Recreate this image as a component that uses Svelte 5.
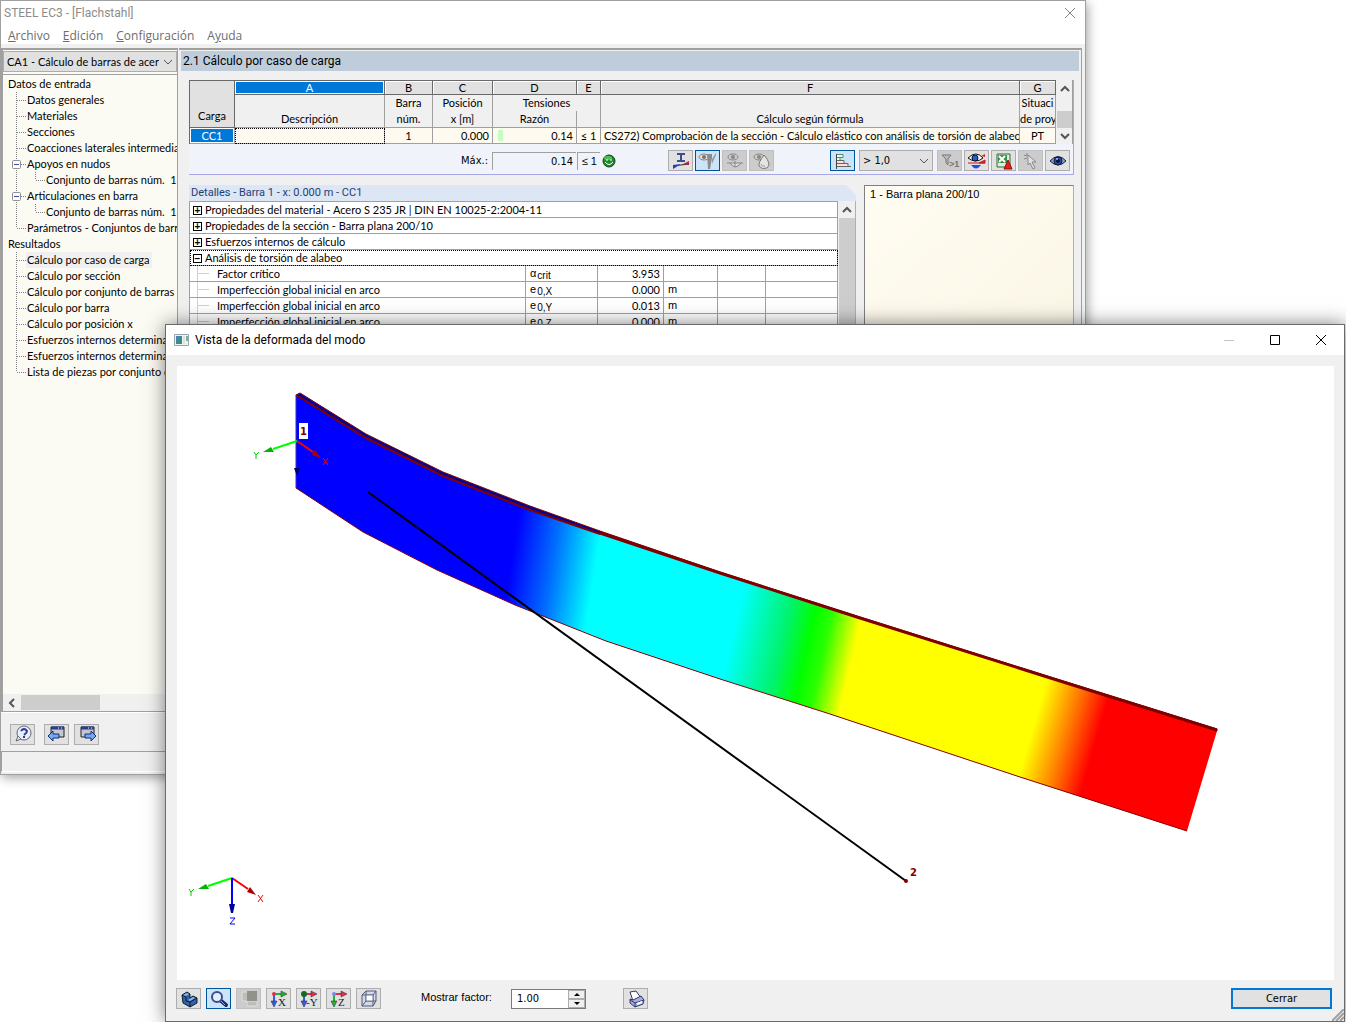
<script lang="ts">
    type TreeItem = { label: string; level: number; last?: boolean; open?: boolean };

    const menu = [
        { key: "A", before: "", after: "rchivo" },
        { key: "E", before: "", after: "dición" },
        { key: "C", before: "", after: "onfiguración" },
        { key: "y", before: "A", after: "uda" },
    ];

    const tree: TreeItem[] = [
        { label: "Datos de entrada", level: 0 },
        { label: "Datos generales", level: 1 },
        { label: "Materiales", level: 1 },
        { label: "Secciones", level: 1 },
        { label: "Coacciones laterales intermedias", level: 1 },
        { label: "Apoyos en nudos", level: 1, open: true },
        { label: "Conjunto de barras núm.  1", level: 2, last: true },
        { label: "Articulaciones en barra", level: 1, open: true },
        { label: "Conjunto de barras núm.  1", level: 2, last: true },
        { label: "Parámetros - Conjuntos de barras", level: 1, last: true },
        { label: "Resultados", level: 0 },
        { label: "Cálculo por caso de carga", level: 1 },
        { label: "Cálculo por sección", level: 1 },
        { label: "Cálculo por conjunto de barras", level: 1 },
        { label: "Cálculo por barra", level: 1 },
        { label: "Cálculo por posición x", level: 1 },
        { label: "Esfuerzos internos determinantes", level: 1 },
        { label: "Esfuerzos internos determinantes", level: 1 },
        { label: "Lista de piezas por conjunto de barras", level: 1, last: true },
    ];

    const groups = [
        "Propiedades del material - Acero S 235 JR | DIN EN 10025-2:2004-11",
        "Propiedades de la sección - Barra plana 200/10",
        "Esfuerzos internos de cálculo",
    ];

    const details = [
        { name: "Factor crítico", symbol: "α", sub: "crit", value: "3.953", unit: "" },
        { name: "Imperfección global inicial en arco", symbol: "e", sub: "0,X", value: "0.000", unit: "m" },
        { name: "Imperfección global inicial en arco", symbol: "e", sub: "0,Y", value: "0.013", unit: "m" },
        { name: "Imperfección global inicial en arco", symbol: "e", sub: "0,Z", value: "0.000", unit: "m" },
    ];

    const viewTools = ["solid", "lens", "layers", "axisX", "axisY", "axisZ", "cube"];
    const titles: Record<string, string> = {
        solid: "Modelo", lens: "Zoom", layers: "Capas", axisX: "Vista X", axisY: "Vista -Y", axisZ: "Vista Z", cube: "Isométrica",
    };

    let selected = $state(11);
    let activeTool = $state("lens");
    let factor = $state("1.00");

    function step(delta: number) {
        factor = (Number(factor) + delta).toFixed(2);
    }
</script>

{#snippet chevron(dir: string)}
    <svg class="chevron {dir}" width="10" height="10" viewBox="0 0 10 10" aria-hidden="true">
        <path d="M1 3 L5 7 L9 3" fill="none" stroke="currentColor" />
    </svg>
{/snippet}

{#snippet icon(name: string)}
    <svg width="20" height="18" viewBox="0 0 20 18" aria-hidden="true">
        {#if name === "section"}
            <path d="M6 2h8M10 2v7M6 9h8" stroke="#3c4f8c" stroke-width="2" fill="none" />
            <path d="M2 17v-4l8-1z" fill="#2438e0" />
            <path d="M10 13l8-4v4z" fill="#e02030" />
            <path d="M2 14l16-2" stroke="#444" />
        {:else if name === "member"}
            <ellipse cx="6" cy="5" rx="5" ry="3" fill="#ddd" stroke="#888" />
            <circle cx="6" cy="5" r="2" fill="#777" />
            <path d="M9 2h5v4l-2 11h-2z" fill="#8c8c8c" />
            <path d="M18 1v2l-4 9v-5z" fill="#999" />
        {:else if name === "diagram"}
            <ellipse cx="8" cy="5" rx="5" ry="3" fill="#ccc" stroke="#888" />
            <circle cx="8" cy="5" r="2" fill="#888" />
            <path d="M5 11q5 8 11 0" stroke="#888" fill="#ddd" />
            <path d="M2 11h16M10 9v6" stroke="#888" />
        {:else if name === "drop"}
            <ellipse cx="7" cy="5" rx="5" ry="3" fill="#ccc" stroke="#888" />
            <circle cx="7" cy="5" r="2" fill="#888" />
            <path d="M12 3q8 9 3 13q-5 2-8-2q-1-3 5-11z" fill="#e4e4e0" stroke="#777" />
            <path d="M9 12q1 3 4 2" stroke="#999" fill="none" />
        {:else if name === "bars"}
            <path d="M3.5 2v15" stroke="#444" />
            <path d="M4 2.5h6v3h-6M4 5.5h3v3h-3" stroke="#4f8f6c" fill="#e6ffe8" />
            <path d="M4 8.5h7v3h-7M4 11.5h11v3h-11M4 14.5h14" stroke="#666" fill="#ffdede" />
        {:else if name === "filter"}
            <path d="M2 3h9l-3 4v6l-2-2v-4z" fill="#bbb" stroke="#777" />
            <text x="9" y="15" class="filter-text">&gt;1</text>
        {:else if name === "results"}
            <path d="M1 6q8-8 15 0q-7 6-15 0z" fill="#fff" stroke="#111" />
            <circle cx="8" cy="6" r="3" fill="#2360d0" stroke="#111" />
            <path d="M1 11h17M12 11h6l0-3z" stroke="#c31824" fill="#ef3030" />
            <path d="M14 4l4-2v3z" fill="#e02030" />
            <path d="M4 13h10q-5 7-10 0z" fill="#3044e8" />
        {:else if name === "excel"}
            <path d="M3 2h13v13h-13z" fill="#dbeedb" stroke="#2d6b37" />
            <path d="M4 3h9v8h-9z" fill="#3d8d4b" />
            <path d="M5 4l6 6M11 4l-6 6" stroke="#fff" stroke-width="2" />
            <path d="M14 8l4 9h-8z" fill="#ea1c1c" stroke="#8d1010" />
        {:else if name === "pick"}
            <path d="M3 3l3 1M3 7l3-1M6 1v3" stroke="#888" />
            <path d="M7 3l8 7l-4 0l3 6l-2 1l-3-6l-2 2z" fill="#e2e2e2" stroke="#888" />
        {:else if name === "eye"}
            <path d="M2 9q8-9 16 0q-8 8-16 0z" fill="#9aa3b5" stroke="#15203e" />
            <circle cx="10" cy="9" r="4" fill="#2251b8" stroke="#0b1840" />
            <circle cx="10" cy="9" r="2" fill="#081430" />
            <path d="M8 7h2" stroke="#fff" />
        {:else if name === "help"}
            <circle cx="11" cy="8" r="7" fill="#e9edf6" stroke="#667" />
            <path d="M5 11l-2 5l5-2z" fill="#e9edf6" stroke="#667" />
            <path d="M8 6q3-4 6 0q0 2-3 4M11 11v2" fill="none" stroke="#273d8e" stroke-width="2" />
        {:else if name === "back" || name === "next"}
            <path d="M4 2h13v10h-13z" fill="#c3c7cf" stroke="#222" />
            <path d="M4 3h13" stroke="#2b3c90" stroke-width="3" />
            <path d="M14 3h1M11 3h1" stroke="#fff" />
            {#if name === "back"}
                <path d="M1 11l5-5v3h6v4h-6v3z" fill="#74a8f4" stroke="#142b78" />
            {:else}
                <path d="M19 11l-5-5v3h-6v4h6v3z" fill="#74a8f4" stroke="#142b78" />
            {/if}
        {:else if name === "solid"}
            <path d="M3 5l5-3l3 2l0 4l3-2l4 2v5l-7 4l-7-4z" fill="#2f65a6" stroke="#111b2c" />
            <path d="M3 5l4 2v4l4 1l7-4M11 12v5" fill="none" stroke="#111b2c" />
            <path d="M4 5l4-2l2 1l-3 2zM9 10l5-3l2 1l-5 3z" fill="#86baf0" />
        {:else if name === "lens"}
            <path d="M11 10l6 5" stroke="#1d2c62" stroke-width="4" stroke-linecap="round" />
            <path d="M12 11l4 4" stroke="#8fa4e4" stroke-width="1" />
            <circle cx="8" cy="7" r="5" fill="#e3f0fd" stroke="#3c4c8c" stroke-width="2" />
        {:else if name === "layers"}
            <path d="M3 2h6v9h-6zM8 11h10v5h-10z" fill="#bebeb9" stroke="#ddd" />
            <path d="M8 1h10v10h-10z" fill="#92928d" />
        {:else if name.startsWith("axis")}
            {@const side = name === "axisZ" ? "#20b432" : "#3a59e8"}
            {@const top = name === "axisX" ? "#20b432" : "#e03048"}
            <path d="M5 4v9" stroke={side} stroke-width="2" />
            <path d="M2 11h6l-3 6z" fill={side} stroke="#223" stroke-width=".5" />
            <path d="M5 4h8" stroke={top} stroke-width="2" />
            <path d="M12 1v6l6-3z" fill={top} stroke="#223" stroke-width=".5" />
            <circle cx="5" cy="4" r={name === "axisY" ? 3 : 2} fill={name === "axisY" ? "#126b20" : name === "axisX" ? "#e03048" : "#7889e8"} />
            <text x={name === "axisY" ? 7 : 9} y="16" class="axis-letter">{name === "axisY" ? "-Y" : name.slice(-1)}</text>
        {:else if name === "cube"}
            <path d="M3 5l4-4h10v10l-3 5h-11z" fill="#d4daea" stroke="#4e587c" />
            <path d="M3 5h11v11M14 5l3-4M7 1v10h10M7 11l-4 5" fill="none" stroke="#4e587c" />
            <path d="M7 5h7v6h-7z" fill="#fff" stroke="#6f7894" />
        {:else if name === "printer"}
            <path d="M4 2l6-1l5 7l-8 3z" fill="#fff" stroke="#333a55" />
            <path d="M4 9l3 1l8-4l3 4l-1 4l-8 3l-5-4z" fill="#a7aede" stroke="#30386a" />
            <path d="M4 10l5 3l9-3M9 13v4" fill="none" stroke="#30386a" />
            <path d="M11 14l5-2" stroke="#fff" stroke-width="2" />
        {/if}
    </svg>
{/snippet}

{#snippet tool(name: string, label: string, active = false, disabled = false)}
    <button class="tool" class:active {disabled} aria-label={label}>{@render icon(name)}</button>
{/snippet}

{#snippet guide(kind: string)}
    <svg class="guide" width="19" height="16" viewBox="0 0 19 16" aria-hidden="true">
        <path d={kind === "last" ? "M8.5 0v8" : "M8.5 0v16"} class="dots" />
        {#if kind !== "pass"}
            <path d="M9 8.5h9" class="dots" />
        {/if}
        {#if kind === "box"}
            <rect x="4.5" y="4.5" width="8" height="8" rx="1" fill="#fbfbf7" stroke="#919191" />
            <path d="M6 8.5h5" stroke="#3b4fa8" />
        {/if}
    </svg>
{/snippet}

<main>
    <section class="window app" aria-label="STEEL EC3">
        <header class="titlebar">
            <h1>STEEL EC3 - [Flachstahl]</h1>
            <button class="close" aria-label="Cerrar ventana">
                <svg width="12" height="12" viewBox="0 0 12 12"><path d="M1 1l10 10M11 1L1 11" stroke="#888" /></svg>
            </button>
        </header>
        <nav>
            {#each menu as item}
                <button>{item.before}<u>{item.key}</u>{item.after}</button>
            {/each}
        </nav>

        <div class="work">
            <aside>
                <div class="combo case">
                    <select aria-label="Caso"><option>CA1 - Cálculo de barras de acero</option></select>
                    {@render chevron("down")}
                </div>
                <ul class="tree">
                    {#each tree as item, i}
                        <li>
                            {#if item.level === 2}{@render guide("pass")}{/if}
                            {#if item.level > 0}{@render guide(item.open ? "box" : item.last ? "last" : "mid")}{/if}
                            <button class:selected={selected === i} onclick={() => (selected = i)}>{item.label}</button>
                        </li>
                    {/each}
                </ul>
                <div class="hscroll">{@render chevron("left")}<span class="thumb"></span></div>
            </aside>

            <div class="content">
                <h2>2.1 Cálculo por caso de carga</h2>

                <div class="results">
                    <div class="grid-wrap">
                        <table class="grid">
                            <colgroup>
                                <col class="c45" /><col class="c150" /><col class="c48" /><col class="c60" />
                                <col class="c84" /><col class="c24" /><col /><col class="c36" />
                            </colgroup>
                            <thead>
                                <tr class="letters">
                                    <th rowspan="3" class="corner">Carga</th>
                                    <th class="current">A</th><th>B</th><th>C</th><th>D</th><th>E</th><th>F</th><th>G</th>
                                </tr>
                                <tr class="names">
                                    <th></th><th>Barra</th><th>Posición</th><th colspan="2">Tensiones</th><th></th><th>Situaci</th>
                                </tr>
                                <tr class="names bottom">
                                    <th>Descripción</th><th>núm.</th><th>x [m]</th><th>Razón</th><th></th>
                                    <th>Cálculo según fórmula</th><th>de proy</th>
                                </tr>
                            </thead>
                            <tbody>
                                <tr>
                                    <th class="current">CC1</th>
                                    <td class="focus"></td>
                                    <td class="center">1</td>
                                    <td class="num">0.000</td>
                                    <td class="num ratio">0.14</td>
                                    <td class="center">≤ 1</td>
                                    <td class="formula">CS272) Comprobación de la sección - Cálculo elástico con análisis de torsión de alabeo</td>
                                    <td class="center">PT</td>
                                </tr>
                            </tbody>
                        </table>
                        <div class="vscroll">{@render chevron("up")}<span class="thumb"></span>{@render chevron("down")}</div>
                    </div>

                    <div class="bar">
                        <span class="max">Máx.:</span>
                        <output class="max-value">0.14</output>
                        <output class="max-limit">≤ 1</output>
                        <svg class="smiley" width="14" height="14" viewBox="0 0 14 14" aria-hidden="true">
                            <circle cx="7" cy="7" r="6" fill="#1d8a2c" stroke="#0b4a18" />
                            <ellipse cx="6" cy="4" rx="4" ry="2" fill="#7de07f" opacity=".6" />
                            <path d="M5 5v2M9 5v2" stroke="#fff" stroke-width="1" />
                            <path d="M3 8q4 5 8 0" fill="none" stroke="#fff" />
                        </svg>
                        <div class="tools left-tools">
                            {@render tool("section", "Sección")}
                            {@render tool("member", "Barra", true)}
                            {@render tool("diagram", "Diagrama", false, true)}
                            {@render tool("drop", "Colores", false, true)}
                        </div>
                        <div class="tools">
                            {@render tool("bars", "Barras de color", true)}
                            <div class="combo limit">
                                <select aria-label="Límite"><option>&gt; 1,0</option></select>
                                {@render chevron("down")}
                            </div>
                            {@render tool("filter", "Filtro", false, true)}
                            {@render tool("results", "Resultados")}
                            {@render tool("excel", "Exportar a Excel")}
                            {@render tool("pick", "Seleccionar", false, true)}
                            {@render tool("eye", "Modo de vista")}
                        </div>
                    </div>
                </div>

                <div class="lower">
                    <div class="details">
                        <h3>Detalles - Barra 1 - x: 0.000 m - CC1</h3>
                        <div class="details-body">
                            <table>
                                <colgroup>
                                    <col /><col class="c72" /><col class="c66" /><col class="c54" /><col class="c48" /><col class="c72" />
                                </colgroup>
                                <tbody>
                                    {#each groups as group}
                                        <tr><td colspan="6" class="group"><span class="toggle">+</span>{group}</td></tr>
                                    {/each}
                                    <tr><td colspan="6" class="group focus"><span class="toggle">−</span>Análisis de torsión de alabeo</td></tr>
                                    {#each details as row}
                                        <tr>
                                            <td class="name">{row.name}</td>
                                            <td class="symbol">{row.symbol}<small>{row.sub}</small></td>
                                            <td class="num">{row.value}</td>
                                            <td class="unit">{row.unit}</td>
                                            <td></td>
                                            <td></td>
                                        </tr>
                                    {/each}
                                </tbody>
                            </table>
                            <div class="vscroll long">{@render chevron("up")}<span class="thumb"></span></div>
                        </div>
                    </div>
                    <div class="preview">1 - Barra plana 200/10</div>
                </div>
            </div>
        </div>

        <footer>
            {@render tool("help", "Ayuda")}
            <span class="pair">{@render tool("back", "Anterior")}{@render tool("next", "Siguiente")}</span>
        </footer>
        <div class="status"></div>
    </section>

    <section class="window dialog" aria-label="Vista de la deformada del modo">
        <header class="titlebar">
            <svg class="appicon" width="16" height="14" viewBox="0 0 16 14" aria-hidden="true">
                <path d="M.5 1.5h14v11h-14z" fill="#eef2f5" stroke="#9ba5ad" />
                <path d="M2 3h6v8h-6z" fill="#3d8f7c" />
                <path d="M2 3h3v5h-3z" fill="#4a86b4" />
                <path d="M9 3h2v8h-2z" fill="#dce2e6" />
                <path d="M12 3h2v5h-2z" fill="#72b59c" />
            </svg>
            <h1>Vista de la deformada del modo</h1>
            <div class="controls">
                <button aria-label="Minimizar" disabled><svg width="12" height="12" viewBox="0 0 12 12"><path d="M1 6.5h10" stroke="#c4c4c4" /></svg></button>
                <button aria-label="Maximizar"><svg width="12" height="12" viewBox="0 0 12 12"><path d="M1.5 1.5h9v9h-9z" fill="none" stroke="#000" /></svg></button>
                <button aria-label="Cerrar ventana"><svg width="12" height="12" viewBox="0 0 12 12"><path d="M1 1l10 10M11 1L1 11" stroke="#000" /></svg></button>
            </div>
        </header>

        <div class="canvas">
            <svg viewBox="177 366 1157 614" preserveAspectRatio="xMidYMid meet" role="img" aria-label="Deformada de la barra">
                <defs>
                    <linearGradient id="cold" gradientUnits="userSpaceOnUse" x1="511" y1="563" x2="594" y2="576">
                        <stop offset="0" stop-color="#00f" />
                        <stop offset=".5" stop-color="#0070ff" />
                        <stop offset="1" stop-color="#0ff" />
                    </linearGradient>
                    <linearGradient id="mild" gradientUnits="userSpaceOnUse" x1="731" y1="640" x2="850" y2="667">
                        <stop offset="0" stop-color="#0ff" />
                        <stop offset=".42" stop-color="#00f36c" />
                        <stop offset=".62" stop-color="#0f0" />
                        <stop offset=".76" stop-color="#2bff00" />
                        <stop offset="1" stop-color="#ff0" />
                    </linearGradient>
                    <linearGradient id="hot" gradientUnits="userSpaceOnUse" x1="1032" y1="730" x2="1094" y2="748">
                        <stop offset="0" stop-color="#ff0" />
                        <stop offset=".55" stop-color="#ff7800" />
                        <stop offset="1" stop-color="#f00" />
                    </linearGradient>
                    <clipPath id="plate">
                        <path d="M296 395L366 438L443 476L530 510L600 534L720 574L860 618L1060 681L1217 731L1187 831L1020 777L830 714L720 679L606 641L515 605L437 570L363 532L296 488Z" />
                    </clipPath>
                </defs>
                <path d="M296 395L300 393L366 434L443 472L530 506L600 531L720 572L860 617L1060 680L1217 729L1217 731L1060 681L860 619L720 575L600 535L530 510L443 476L366 438Z" fill="#00009c" stroke="#800000" />
                <g clip-path="url(#plate)">
                    <path d="M290 380H690L670 700H290Z" fill="url(#cold)" />
                    <path d="M670 380H990L950 860H640Z" fill="url(#mild)" />
                    <path d="M980 380H1230V860H935Z" fill="url(#hot)" />
                </g>
                <path d="M296 395L366 438L443 476L530 510L600 534" fill="none" stroke="#800000" stroke-width="2" />
                <path d="M600 533L720 573L860 618L1060 681L1217 730" fill="none" stroke="#800000" stroke-width="3" />
                <path d="M296 488L363 532L437 570L515 605L606 641L720 679L830 714L1020 777L1187 831" fill="none" stroke="#800000" />
                <path d="M296 395V488" stroke="#3030c0" />
                <path d="M368 492L906 881" stroke="#000" stroke-width="2" />
                <circle cx="906" cy="881" r="2" fill="#800000" />
                <text x="910" y="876" class="node">2</text>

                <path d="M299 423h9v16h-9z" fill="#fff" />
                <text x="300" y="435" class="node">1</text>
                <path d="M294 468h6l-3 8z" fill="#000070" />

                {#each [[297, 441], [232, 878]] as [x, y], i}
                    <path d="M{x} {y}l-24 8" stroke="#0f0" stroke-width="2" />
                    <path d="M{x - 34} {y + 11}l8-5l3 5z" fill="#00b400" />
                    <path d="M{x} {y}l16 11" stroke="#f00" stroke-width="2" />
                    <path d="M{x + 24} {y + 17}l-9-3l3-5z" fill="#a80000" />
                    <path d="M{x - 43} {y + 11}l2 3l3-3M{x - 41} {y + 14}v4" stroke="#0c0" fill="none" />
                    <path d="M{x + 26} {y + 17}l5 7M{x + 31} {y + 17}l-5 7" stroke="#f00" fill="none" />
                    {#if i === 1}
                        <path d="M{x} {y}v28" stroke="#00f" stroke-width="2" />
                        <path d="M{x - 3} {y + 26}h6l-2 9h-2z" fill="#0000a0" />
                        <path d="M{x - 2} {y + 40}h5l-5 6h5" stroke="#00f" fill="none" />
                    {/if}
                {/each}
            </svg>
        </div>

        <footer>
            <div class="view-tools">
                {#each viewTools as name}
                    <button class="tool" class:active={activeTool === name} disabled={name === "layers"} aria-label={titles[name]} onclick={() => (activeTool = name)}>
                        {@render icon(name)}
                    </button>
                {/each}
            </div>
            <label for="factor">Mostrar factor:</label>
            <div class="spinner">
                <input id="factor" type="text" bind:value={factor} />
                <span class="arrows">
                    <button aria-label="Aumentar" onclick={() => step(1)}><svg width="6" height="3" viewBox="0 0 6 3"><path d="M0 3l3-3l3 3z" /></svg></button>
                    <button aria-label="Reducir" onclick={() => step(-1)}><svg width="6" height="3" viewBox="0 0 6 3"><path d="M0 0l3 3l3-3z" /></svg></button>
                </span>
            </div>
            {@render tool("printer", "Imprimir")}
            <button class="primary">Cerrar</button>
        </footer>
        <svg class="grip" width="12" height="12" viewBox="0 0 12 12" aria-hidden="true">
            <path d="M0 12L12 0M4 12l8-8M8 12l4-4" stroke="#a0a0a0" stroke-width="2" />
        </svg>
    </section>
</main>

<style>
    :global(body) {
        margin: 0;
        background: #fff;
    }
    main {
        --ui: Lato, "Liberation Sans", sans-serif;
        --title: Roboto, "Liberation Sans", sans-serif;
        --menu: "Open Sans", "Noto Sans", sans-serif;
        --sans: "Liberation Sans", sans-serif;
        --tahoma: "DejaVu Sans Condensed", "Liberation Sans", sans-serif;
        --line: #a0a0a0;
        position: relative;
        height: 100vh;
        min-height: 800px;
        overflow: hidden;
        font: 11px/16px var(--ui);
        color: #000;
    }
    main * {
        box-sizing: border-box;
    }
    button, select, input {
        font: inherit;
        color: inherit;
        margin: 0;
        padding: 0;
        border: 0;
        background: none;
        border-radius: 0;
    }
    h1, h2, h3, ul {
        margin: 0;
        padding: 0;
        font-weight: normal;
    }
    svg {
        display: block;
        flex: none;
    }
    .window {
        position: absolute;
        display: flex;
        flex-direction: column;
        background: #f0f0f0;
    }
    .app {
        inset: 0 260px 247px 0;
        border: 1px solid var(--line);
        box-shadow: 2px 3px 10px rgba(0, 0, 0, .35);
    }
    .dialog {
        inset: 324px 1px 0 165px;
        border: 1px solid #6a6a6a;
        box-shadow: 0 0 18px rgba(0, 0, 0, .5);
    }
    .titlebar {
        display: flex;
        align-items: center;
        background: #fff;
    }
    .titlebar h1 {
        font: 12px/24px var(--title);
    }

    /* main window */
    .app .titlebar {
        height: 24px;
        padding: 0 9px 0 3px;
        justify-content: space-between;
        color: #8c8c8c;
    }
    nav {
        display: flex;
        gap: 13px;
        padding: 0 7px;
        background: #fff;
        height: 19px;
        font: 12px/22px var(--menu);
        color: #6d6d6d;
    }
    .work {
        flex: 1;
        min-height: 0;
        display: flex;
        margin-top: 4px;
        border-bottom: 1px solid #fff;
    }
    aside {
        width: 177px;
        flex: none;
        display: flex;
        flex-direction: column;
        border: solid var(--line);
        border-width: 2px 1px 1px 2px;
        background: #fcfbf3;
    }
    .combo {
        position: relative;
        border: 1px solid #adadad;
        background: #e1e1e1;
    }
    .combo select {
        appearance: none;
        display: block;
        width: 100%;
        height: 100%;
        padding: 0 17px 0 3px;
        overflow: hidden;
    }
    .combo .chevron {
        position: absolute;
        right: 3px;
        top: 5px;
        pointer-events: none;
    }
    .case {
        height: 21px;
        margin-top: 1px;
    }
    .tree {
        flex: 1;
        min-height: 0;
        overflow: hidden;
        list-style: none;
        margin-top: 2px;
        border-top: 1px solid var(--line);
        padding: 1px 0 0 5px;
    }
    .tree li {
        display: flex;
        height: 16px;
        white-space: pre;
    }
    .tree button {
        flex: none;
        margin-left: -1px;
        padding: 0 2px 0 1px;
        line-height: 16px;
    }
    .tree li .selected {
        background: #f0f0f0;
    }
    .dots {
        stroke: #808080;
        stroke-dasharray: 1 1;
        fill: none;
    }
    .chevron {
        color: #555;
    }
    .up {
        transform: rotate(180deg);
    }
    .left {
        transform: rotate(90deg);
    }
    .hscroll {
        display: flex;
        align-items: center;
        gap: 4px;
        height: 17px;
        padding-left: 4px;
        background: #f0f0f0;
    }
    .hscroll .thumb {
        width: 79px;
        height: 15px;
        background: #cdcdcd;
    }
    .hscroll .chevron path, .vscroll .chevron path {
        stroke-width: 2;
    }
    .content {
        flex: 1;
        min-width: 0;
        display: flex;
        flex-direction: column;
        margin: 0 3px 0 1px;
        border: solid var(--line);
        border-width: 2px 1px 0 0;
        padding-top: 1px;
    }
    h2 {
        height: 20px;
        margin: 0 2px;
        padding-left: 2px;
        background: #bfcddb;
        font: 12px/20px var(--title);
    }
    .results {
        margin: 9px 7px 0 10px;
        padding-bottom: 1px;
        background: #f0f3f9;
        border: solid #a8a8e8;
        border-width: 0 1px 1px 0;
    }
    .grid-wrap {
        display: flex;
        gap: 1px;
        background: #f0f0f0;
    }
    table {
        flex: 1;
        width: 100%;
        min-width: 0;
        table-layout: fixed;
        border-collapse: separate;
        border-spacing: 0;
        font: 11px/15px var(--ui);
        white-space: nowrap;
    }
    th, td {
        padding: 0;
        font-weight: normal;
        overflow: hidden;
        border: solid var(--line);
        border-width: 0 1px 1px 0;
    }
    .grid {
        border: solid #696969;
        border-width: 1px 0 0 1px;
    }
    .letters th {
        height: 14px;
        line-height: 13px;
        background: #e1e1e1;
        border-color: #696969;
        box-shadow: inset 1px 1px #fff;
    }
    .letters .corner {
        vertical-align: bottom;
        padding-bottom: 4px;
        line-height: 15px;
        box-shadow: none;
    }
    .grid th.current {
        background: #0078d7;
        color: #fff;
        box-shadow: inset 0 0 0 1px #fff;
    }
    .names th {
        height: 16px;
        border-bottom: 0;
        vertical-align: top;
    }
    .names.bottom th {
        height: 17px;
        border-bottom: 1px solid var(--line);
    }
    .grid td, .grid tbody th {
        height: 16px;
        background: #fffaef;
    }
    .c24 { width: 24px; }
    .c36 { width: 36px; }
    .c45 { width: 45px; }
    .c48 { width: 48px; }
    .c54 { width: 54px; }
    .c60 { width: 60px; }
    .c66 { width: 66px; }
    .c72 { width: 72px; }
    .c84 { width: 84px; }
    .c150 { width: 150px; }
    .center {
        text-align: center;
    }
    .num {
        text-align: right;
        padding-right: 3px;
    }
    .focus {
        outline: 1px dotted #000;
        outline-offset: -1px;
    }
    .grid td.ratio {
        background: linear-gradient(#c0ffc0, #c0ffc0) 5px 2px / 5px 11px no-repeat #fffaef;
    }
    td.formula {
        padding: 0 3px;
    }
    .vscroll {
        display: flex;
        flex: none;
        flex-direction: column;
        align-items: center;
        justify-content: space-between;
        width: 16px;
        padding: 4px 0 3px;
        border-right: 1px solid var(--line);
    }
    .vscroll .thumb {
        width: 100%;
        height: 17px;
        margin-top: 13px;
        background: #cdcdcd;
    }
    .bar {
        display: flex;
        align-items: center;
        height: 29px;
        padding: 4px 3px 0 0;
        font: 11px/16px var(--tahoma);
    }
    .max {
        width: 303px;
        padding-right: 4px;
        text-align: right;
    }
    output {
        height: 18px;
        padding-right: 3px;
        text-align: right;
        border: solid var(--line);
        border-width: 1px 0 0 1px;
        line-height: 17px;
    }
    .max-value {
        width: 84px;
    }
    .max-limit {
        width: 23px;
        margin-left: 1px;
        font-family: var(--sans);
    }
    .smiley {
        margin-left: 2px;
    }
    .tools {
        display: flex;
        gap: 2px;
    }
    .left-tools {
        margin: 0 auto 0 52px;
    }
    .tool {
        display: flex;
        align-items: center;
        justify-content: center;
        width: 25px;
        height: 21px;
        flex: none;
        border: 1px solid #adadad;
        background: #e1e1e1;
    }
    .tool.active {
        border-color: #005499;
        background: #cce4f7;
    }
    .tool:disabled {
        border-color: #bfbfbf;
        background: #cccccc;
    }
    .limit {
        width: 74px;
        height: 21px;
        margin: 0 2px;
    }
    .lower {
        flex: 1;
        min-height: 0;
        display: flex;
        gap: 8px;
        margin: 10px 7px 8px 10px;
    }
    .details {
        flex: 1;
        min-width: 0;
        display: flex;
        flex-direction: column;
    }
    h3 {
        height: 16px;
        flex: none;
        padding-left: 2px;
        background: #dce6f4;
        clip-path: polygon(0 0, calc(100% - 10px) 0, 100% 10px, 100% 100%, 0 100%);
        font: 11px/16px var(--title);
        color: #1f3f73;
    }
    .details-body {
        flex: 1;
        min-height: 0;
        display: flex;
        align-items: flex-start;
        gap: 1px;
        border-right: 1px solid #a8a8e8;
    }
    .details table {
        background: #fff;
        border: solid var(--line);
        border-width: 1px 0 0 1px;
    }
    .details td {
        height: 16px;
    }
    .toggle {
        display: inline-block;
        width: 9px;
        height: 9px;
        margin: 0 3px;
        border: 1px solid #000;
        vertical-align: 0;
        text-align: center;
        font: bold 10px/7px var(--sans);
    }
    .name {
        background:
            linear-gradient(#d0d0d0, #d0d0d0) 7px 0 / 1px 100% no-repeat,
            linear-gradient(#d0d0d0, #d0d0d0) 7px 7px / 12px 1px no-repeat;
    }
    td.name {
        padding-left: 27px;
    }
    td.symbol, td.unit {
        padding-left: 4px;
        font-family: var(--sans);
    }
    small {
        margin-left: 1px;
        font-size: 10px;
        vertical-align: -2px;
        line-height: 9px;
    }
    .vscroll.long {
        align-self: stretch;
        border: 0;
        padding-bottom: 0;
    }
    .long .thumb {
        flex: 1;
        margin-top: 3px;
    }
    .preview {
        width: 210px;
        padding: 0 5px;
        border: solid #808080;
        border-width: 1px 1px 0 1px;
        border-right-color: #a8a8e8;
        background: linear-gradient(135deg, #fffcf2, #faf5e3 60%, #fdf3e0);
        font: 11px/16px var(--sans);
    }
    .app footer {
        display: flex;
        align-items: center;
        gap: 9px;
        height: 38px;
        padding: 4px 9px 0;
    }
    .pair {
        display: flex;
        gap: 5px;
    }
    .status {
        height: 21px;
        margin: 0 1px 2px 0;
        border: solid var(--line);
        border-width: 1px 0 0 1px;
        border-bottom: 1px solid #fff;
    }

    /* dialog */
    .dialog .titlebar {
        height: 30px;
        padding: 0 17px 0 8px;
    }
    .dialog h1 {
        margin-left: 5px;
    }
    .controls {
        display: flex;
        gap: 34px;
        margin-left: auto;
    }
    .canvas {
        flex: 1;
        min-height: 0;
        margin: 11px 10px 8px 11px;
        background: #fff;
    }
    .canvas svg {
        width: 100%;
        height: 100%;
    }
    .node {
        font: bold 10px "DejaVu Sans", sans-serif;
        fill: #800000;
    }
    .axis-letter {
        font: 11px "Liberation Serif", serif;
        fill: #222;
    }
    .filter-text {
        font: bold 9px "Liberation Sans", sans-serif;
        fill: #777;
    }
    .dialog footer {
        display: flex;
        align-items: center;
        padding: 0 12px 12px 10px;
        font: 11px/16px var(--sans);
    }
    .view-tools {
        display: flex;
        gap: 5px;
    }
    label {
        width: 90px;
        margin-left: 40px;
        padding-bottom: 3px;
    }
    .spinner {
        display: flex;
        width: 75px;
        height: 20px;
        margin-right: 37px;
        border: 1px solid #7a7a7a;
        background: #fff;
    }
    .spinner input {
        flex: 1;
        min-width: 0;
        padding-left: 5px;
        font-family: var(--tahoma);
    }
    .arrows {
        display: flex;
        flex-direction: column;
        width: 17px;
        background: #f0f0f0;
    }
    .arrows button {
        flex: 1;
        display: flex;
        align-items: center;
        justify-content: center;
        border: 1px solid #adadad;
    }
    .primary {
        width: 101px;
        height: 21px;
        margin-left: auto;
        border: 2px solid #0078d7;
        background: #e1e1e1;
        font-family: var(--tahoma);
    }
    .grip {
        position: absolute;
        right: 0;
        bottom: 0;
    }
</style>
